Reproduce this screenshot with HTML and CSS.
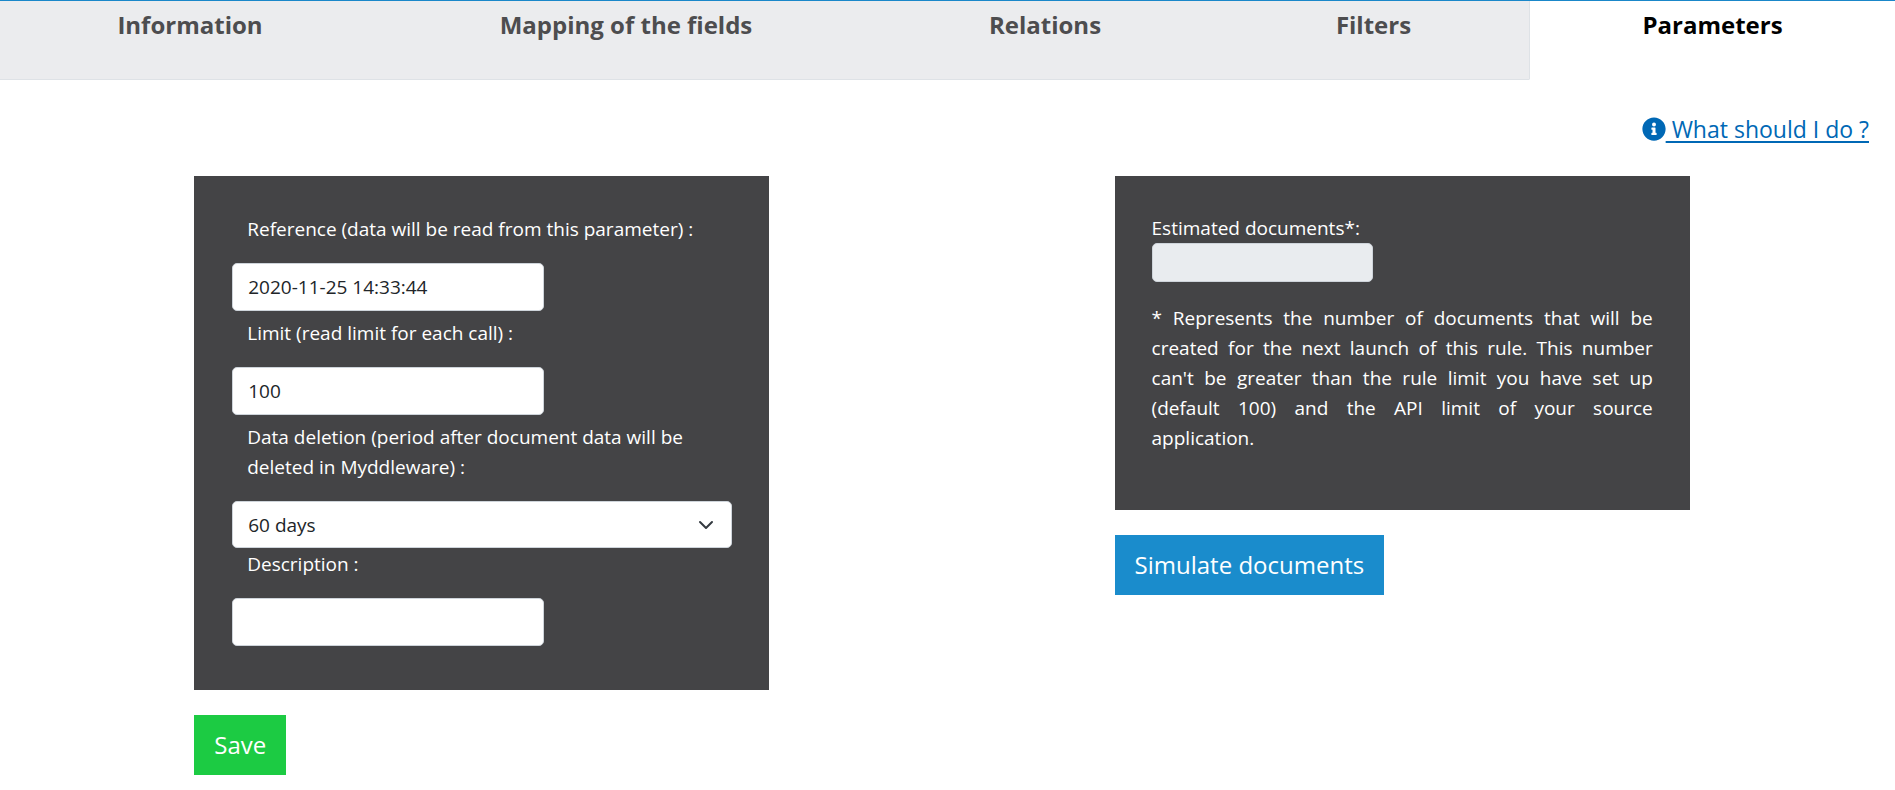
FILE: index.html
```html
<!DOCTYPE html>
<html lang="en">
<head>
<meta charset="utf-8">
<meta name="viewport" content="width=device-width, initial-scale=1">
<title>Rule parameters</title>
<link rel="stylesheet" href="styles.css">
</head>
<body>
<nav class="tabs">
  <a class="tab" href="#information">Information</a>
  <a class="tab" href="#mapping">Mapping of the fields</a>
  <a class="tab" href="#relations">Relations</a>
  <a class="tab" href="#filters">Filters</a>
  <a class="tab tab-active" href="#parameters" aria-current="page">Parameters</a>
</nav>
<main>
  <div class="help">
    <a class="help-link" href="#help"><svg class="help-icon" viewBox="0 0 512 512" aria-hidden="true"><path fill="currentColor" d="M256 8C119 8 8 119 8 256s111 248 248 248 248-111 248-248S393 8 256 8zm0 110a42 42 0 1 1 0 84 42 42 0 0 1 0-84zm56 254a12 12 0 0 1-12 12h-88a12 12 0 0 1-12-12v-24a12 12 0 0 1 12-12h12v-64h-12a12 12 0 0 1-12-12v-24a12 12 0 0 1 12-12h64a12 12 0 0 1 12 12v100h12a12 12 0 0 1 12 12z"/></svg><span class="help-text">&nbsp;What should I do ?</span></a>
  </div>
  <div class="columns">
    <form class="column">
      <div class="panel">
        <label class="label" for="reference">Reference (data will be read from this parameter) :</label>
        <input class="control" id="reference" type="text" value="2020-11-25 14:33:44">
        <label class="label" for="limit">Limit (read limit for each call) :</label>
        <input class="control" id="limit" type="text" value="100">
        <label class="label" for="deletion">Data deletion (period after document data will be deleted in Myddleware) :</label>
        <div class="select-wrap">
          <select class="control select" id="deletion"><option>60 days</option></select>
          <svg class="chevron" viewBox="0 0 16 16" aria-hidden="true"><path fill="none" stroke="#343a40" stroke-width="2" stroke-linecap="round" stroke-linejoin="round" d="m2 5 6 6 6-6"/></svg>
        </div>
        <label class="label label-tight" for="description">Description :</label>
        <input class="control" id="description" type="text">
      </div>
      <button class="button button-save" type="submit">Save</button>
    </form>
    <section class="column">
      <div class="panel panel-estimate">
        <label for="estimated">Estimated documents*:</label>
        <input class="estimate" id="estimated" type="text" disabled>
        <p class="note">* Represents the number of documents that will be created for the next launch of this rule. This number can't be greater than the rule limit you have set up (default 100) and the API limit of your source application.</p>
      </div>
      <button class="button button-simulate" type="button">Simulate documents</button>
    </section>
  </div>
</main>
</body>
</html>
```
FILE: styles.css
```css
* {
  box-sizing: border-box;
}

body {
  margin: 0;
  background: #fff;
  color: #212529;
  font-family: "Segoe UI", "Open Sans", "Noto Sans", sans-serif;
  font-size: 19px;
  line-height: 30px;
}

.tabs {
  display: grid;
  grid-template-columns: 380fr 492fr 346fr 311fr 366fr;
  border-top: 1px solid #1a87c9;
  background: #ebecee;
}

.tab {
  height: 79px;
  padding-top: 6px;
  border-bottom: 1px solid #dee2e6;
  color: #4d4d4f;
  font-size: 24px;
  font-weight: 700;
  line-height: 36px;
  text-align: center;
  text-decoration: none;
}

.tab-active {
  border-bottom-color: #fff;
  border-left: 1px solid #dee2e6;
  background: #fff;
  color: #000;
}

.help {
  display: flex;
  justify-content: flex-end;
  padding: 31px 26px 29px;
}

.help-link {
  display: flex;
  align-items: center;
  color: #0068b5;
  font-size: 23px;
  line-height: 36px;
  text-decoration: none;
}

.help-icon {
  width: 24px;
  height: 24px;
}

.help-text {
  text-decoration: underline;
  text-decoration-thickness: 2px;
  text-underline-offset: 3px;
}

.columns {
  display: grid;
  grid-template-columns: 5fr 3fr 5fr;
  align-items: start;
  padding: 0 10.83% 15px 10.25%;
}

.column:last-child {
  grid-column: 3;
}

.panel {
  display: flex;
  flex-direction: column;
  align-items: flex-start;
  padding: 31px 37px 44px 38px;
  background: #444446;
  color: #fff;
}

.label {
  padding: 7px 15px 19px;
}

.label-tight {
  padding-top: 1px;
}

.control {
  width: 312px;
  max-width: 100%;
  height: 48px;
  padding: 0 15px;
  border: 1px solid #ced4da;
  border-radius: 5px;
  background: #fff;
  color: #212529;
  font: inherit;
}

.select-wrap {
  display: grid;
  align-items: center;
  width: 100%;
}

.select {
  grid-area: 1 / 1;
  width: 100%;
  height: 47px;
  appearance: none;
}

.chevron {
  grid-area: 1 / 1;
  justify-self: end;
  width: 16px;
  height: 16px;
  margin-right: 18px;
  pointer-events: none;
}

.panel-estimate {
  padding: 37px 37px 57px;
}

.estimate {
  width: 221px;
  height: 39px;
  border: 1px solid #ced4da;
  border-radius: 5px;
  background: #e9ecef;
}

.note {
  margin: 21px 0 0;
  text-align: justify;
}

.button {
  height: 60px;
  margin-top: 25px;
  padding: 0 20px;
  border: 0;
  color: #fff;
  font: inherit;
  font-size: 24px;
}

.button-save {
  background: #1ccb43;
}

.button-simulate {
  background: #1a8ccc;
}
```
